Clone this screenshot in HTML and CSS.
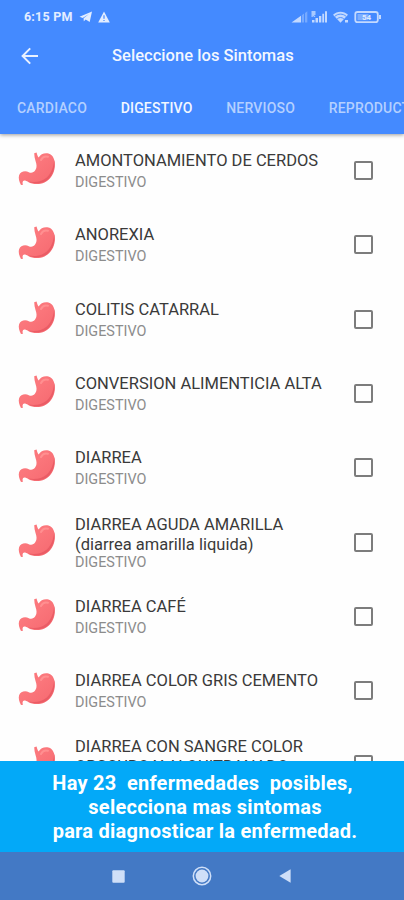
FILE: index.html
```html
<!DOCTYPE html>
<html lang="es">
  <head>
    <meta charset="UTF-8" />
    <meta name="viewport" content="width=device-width, initial-scale=1.0" />
    <title>Seleccione los Sintomas</title>
    <link rel="stylesheet" href="styles.css">
  </head>
  <body>
    <!-- Shared stomach icon -->
    <svg class="defs" width="0" height="0">
      <defs>
        <linearGradient id="shade" x1="0" y1="0" x2="1" y2="1">
          <stop offset="0.4" stop-color="#fb777c" />
          <stop offset="1" stop-color="#f5686f" />
        </linearGradient>
        <symbol id="stomach" viewBox="0 0 40 36">
          <path d="M16.2 2.2 L18.6 1.4 C19.1 3.4 19.6 4.8 20.6 6.6 C22.6 3 26.5 1.6 30.5 2.5 C35.4 3.8 37.2 9.5 36.8 15.5 C36.4 22.5 32.5 28.5 26.5 31.4 C21.5 33.8 14.5 33.6 10.2 31 C7.8 29.5 5.9 29 5 30.2 C4.2 31.5 4.7 32.4 5 33.8 L3 34 C1.2 30.6 0.2 27.4 1.1 24.3 C2.3 20.5 7.2 19.2 10.8 21.2 C13.2 22.5 15.8 21.6 17.4 19.1 C19.2 16.3 18.6 13.1 17.6 10.2 C16.7 7.5 16.3 4.9 16.2 2.2 Z" fill="url(#shade)" />
          <path d="M36.2 9 C37.6 15 35.3 24 29.4 28.9 C23.5 33 15.5 33.2 10.5 30.6 C17 31.8 24 30.8 28.8 26.5 C33.6 22 35.6 15.5 36.2 9 Z" fill="#ea5c65" />
          <path d="M23 9 C24.5 6 27.5 5 30 5.8" fill="none" stroke="#ff8f90" stroke-width="2" stroke-linecap="round" />
        </symbol>
      </defs>
    </svg>

    <div class="screen">
      <header class="header">
        <div class="status">
          <span class="time">6:15 PM</span>
          <svg class="telegram" width="14" height="12" viewBox="0 0 14 12">
            <path d="M0.5 5.7 L13 0.4 L10.7 11 L6.7 8.4 L4.8 10.3 L4.6 7.3 L10 3 L3.7 6.9 Z" fill="#e3edff" />
          </svg>
          <svg class="warning" width="12" height="12" viewBox="0 0 12 12">
            <path d="M6 0.6 L11.8 11.4 H0.2 Z" fill="#e3edff" />
            <path d="M6 4.2 V7.8 M6 8.9 V10.1" stroke="#448aff" stroke-width="1.2" />
          </svg>
          <svg class="signals" width="92" height="14" viewBox="0 0 92 14">
            <g fill="#c3d9ff">
              <path d="M0.5 12.5 L10 5.8 V12.5 Z" />
              <path d="M10.8 5.2 L13 3.6 V12.5 H10.8 Z M14 2.9 L16.3 1.2 V12.5 H14 Z" opacity="0.4" />
              <path d="M20.5 1 H24.5 V5 H23 L24.5 7 H23 L21.8 5.4 V7 H20.5 Z" opacity="0.8" />
              <path d="M21 10 H23.5 V12.5 H21 Z M24.5 8 H27 V12.5 H24.5 Z M28 6 H30.3 V12.5 H28 Z M31.3 3.7 H33.1 V12.5 H31.3 Z M34 1.2 H36 V12.5 H34 Z" />
              <path d="M42 4.7 C46.2 0.7 52.8 0.7 57 4.7 L49.5 12.7 Z" />
              <path d="M54 10 H57 V12.5 H54 Z" />
              <path d="M88 5 H90 V9 H88 Z" />
            </g>
            <path d="M43.8 6.4 C47 3.4 52 3.4 55.2 6.4 M46.2 8.8 C48 7.1 51 7.1 52.8 8.8" fill="none" stroke="#448aff" stroke-width="0.9" />
            <rect x="64.3" y="2" width="22.5" height="10.2" rx="2.2" fill="none" stroke="#c3d9ff" stroke-width="1.8" />
            <rect x="66.5" y="4" width="11" height="6.2" fill="#c3d9ff" opacity="0.45" />
            <text class="battery" x="75.5" y="10.2">54</text>
          </svg>
        </div>
        <div class="appbar">
          <svg class="back" width="18" height="18" viewBox="0 0 18 18">
            <path d="M17 9 H2 M9.2 1.4 L1.6 9 L9.2 16.6" fill="none" stroke="#e9f1ff" stroke-width="2" />
          </svg>
          <h1>Seleccione los Sintomas</h1>
        </div>
        <nav class="tabs">
          <span class="tab">CARDIACO</span>
          <span class="tab active">DIGESTIVO</span>
          <span class="tab">NERVIOSO</span>
          <span class="tab">REPRODUCTIVO</span>
        </nav>
      </header>

      <main class="list">
        <div class="row">
          <svg class="icon"><use href="#stomach" /></svg>
          <div class="info"><p class="name">AMONTONAMIENTO DE CERDOS</p><p class="kind">DIGESTIVO</p></div>
          <span class="check"></span>
        </div>
        <div class="row">
          <svg class="icon"><use href="#stomach" /></svg>
          <div class="info"><p class="name">ANOREXIA</p><p class="kind">DIGESTIVO</p></div>
          <span class="check"></span>
        </div>
        <div class="row">
          <svg class="icon"><use href="#stomach" /></svg>
          <div class="info"><p class="name">COLITIS CATARRAL</p><p class="kind">DIGESTIVO</p></div>
          <span class="check"></span>
        </div>
        <div class="row">
          <svg class="icon"><use href="#stomach" /></svg>
          <div class="info"><p class="name">CONVERSION ALIMENTICIA ALTA</p><p class="kind">DIGESTIVO</p></div>
          <span class="check"></span>
        </div>
        <div class="row">
          <svg class="icon"><use href="#stomach" /></svg>
          <div class="info"><p class="name">DIARREA</p><p class="kind">DIGESTIVO</p></div>
          <span class="check"></span>
        </div>
        <div class="row tall">
          <svg class="icon"><use href="#stomach" /></svg>
          <div class="info"><p class="name">DIARREA AGUDA AMARILLA<br />(diarrea amarilla liquida)</p><p class="kind">DIGESTIVO</p></div>
          <span class="check"></span>
        </div>
        <div class="row">
          <svg class="icon"><use href="#stomach" /></svg>
          <div class="info"><p class="name">DIARREA CAFÉ</p><p class="kind">DIGESTIVO</p></div>
          <span class="check"></span>
        </div>
        <div class="row">
          <svg class="icon"><use href="#stomach" /></svg>
          <div class="info"><p class="name">DIARREA COLOR GRIS CEMENTO</p><p class="kind">DIGESTIVO</p></div>
          <span class="check"></span>
        </div>
        <div class="row tall">
          <svg class="icon"><use href="#stomach" /></svg>
          <div class="info"><p class="name">DIARREA CON SANGRE COLOR<br />OBSCURO Y ALQUITRANADO</p></div>
          <span class="check"></span>
        </div>
      </main>

      <div class="banner">
        <p class="count">Hay 23&nbsp; enfermedades&nbsp; posibles,</p>
        <p>selecciona mas sintomas</p>
        <p>para diagnosticar la enfermedad.</p>
      </div>

      <footer class="navbar">
        <svg width="13" height="13" viewBox="0 0 13 13">
          <rect x="0.3" y="0.3" width="12.4" height="12.4" rx="1" fill="#cfdff8" />
        </svg>
        <svg width="20" height="20" viewBox="0 0 20 20">
          <circle cx="10" cy="10" r="8.7" fill="none" stroke="#cfdff8" stroke-width="1.5" />
          <circle cx="10" cy="10" r="6.4" fill="#cfdff8" />
        </svg>
        <svg width="12" height="14" viewBox="0 0 12 14">
          <path d="M0.3 7 L11.6 0.3 V13.7 Z" fill="#cfdff8" />
        </svg>
      </footer>
    </div>
  </body>
</html>
```

FILE: styles.css
```css
body {
  margin: 0;
  font-family: Roboto, "Liberation Sans", sans-serif;
  background: #fefefe;
}
p,
h1 {
  margin: 0;
}
.defs {
  display: block;
}
.screen {
  display: flex;
  flex-direction: column;
  height: 900px;
  overflow: hidden;
}
.header {
  flex: none;
  height: 134px;
  background: #448aff;
  box-shadow: 0 1px 4px rgba(0, 0, 0, 0.4);
  overflow: hidden;
  z-index: 1;
}
.status {
  display: flex;
  align-items: center;
  height: 33px;
  padding: 0 21px 0 24px;
}
.time {
  width: 55px;
  font-size: 12.5px;
  font-weight: 700;
  letter-spacing: 0.2px;
  color: #e3edff;
  white-space: nowrap;
}
.warning {
  margin-left: 5px;
}
.signals {
  margin-left: auto;
}
.battery {
  font-size: 8px;
  font-weight: 700;
  text-anchor: middle;
  fill: #dfeaff;
}
.appbar {
  display: flex;
  align-items: center;
  height: 45px;
  padding-left: 21px;
}
h1 {
  margin-left: 73px;
  font-size: 16.5px;
  font-weight: 500;
  letter-spacing: 0.04px;
  color: #f2f7ff;
  white-space: nowrap;
}
.tabs {
  display: flex;
  align-items: center;
  gap: 33.6px;
  height: 59px;
  padding-left: 17px;
}
.tab {
  font-size: 14px;
  font-weight: 500;
  letter-spacing: 0.2px;
  color: #b4d0ff;
}
.active {
  color: #f2f7ff;
}
.list {
  flex: 1;
  min-height: 0;
  overflow: hidden;
}
.row {
  display: flex;
  align-items: center;
  height: 74.3px;
  padding: 0 31px 0 18px;
}
.row:first-child {
  height: 73.7px;
}
.icon {
  flex: none;
  width: 40px;
  height: 36px;
  margin-bottom: 3px;
}
.info {
  flex: 1;
  padding-top: 2px;
  margin-left: 17px;
  white-space: nowrap;
}
.name {
  font-size: 16.5px;
  line-height: 20px;
  color: #3a3a3a;
}
.kind {
  margin-top: 3px;
  font-size: 14.4px;
  line-height: 18px;
  color: #8c8c8c;
}
.tall .kind {
  margin-top: -1px;
}
.tall:last-child .info {
  padding-bottom: 17px;
}
.check {
  box-sizing: border-box;
  width: 19px;
  height: 19px;
  border: 2px solid #7c7c7c;
  border-radius: 2px;
}
.banner {
  flex: none;
  box-sizing: border-box;
  height: 91px;
  padding: 10px 0 0 6px;
  background: #03a9f8;
  color: #fff;
  font-size: 20px;
  font-weight: 700;
  letter-spacing: 0.25px;
  line-height: 24px;
  text-align: center;
  white-space: nowrap;
}
.count {
  padding-right: 5px;
}
.navbar {
  flex: none;
  display: flex;
  align-items: center;
  justify-content: center;
  gap: 67px;
  height: 48px;
  padding-right: 1px;
  background: #4379c5;
}
```
